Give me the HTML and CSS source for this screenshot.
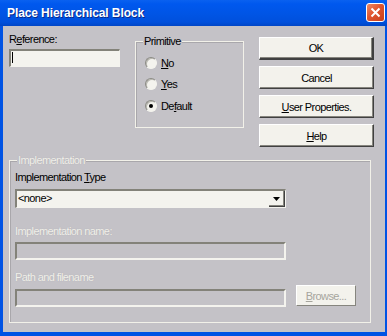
FILE: index.html
```html
<!DOCTYPE html>
<html lang="en">

<head>
    <meta charset="UTF-8">
    <title>Place Hierarchical Block</title>
    <link rel="stylesheet" href="styles.css">
</head>

<body>
    <div class="window">
        <div class="titlebar">
            <span class="title">Place Hierarchical Block</span>
            <span class="close">
                <svg width="11" height="11" viewBox="0 0 11 11">
                    <path d="M1.5 1.5 L9.5 9.5 M9.5 1.5 L1.5 9.5" stroke="#fff" stroke-width="2" fill="none" />
                </svg>
            </span>
        </div>

        <div class="client">
            <div class="top">
                <!-- Reference -->
                <div class="ref-col">
                    <div class="label">R<u>e</u>ference:</div>
                    <div class="textbox"><span class="caret"></span></div>
                </div>

                <!-- Primitive -->
                <div class="group primitive">
                    <span class="group-title">Primitive</span>
                    <div class="radio-row"><span class="radio"></span><span><u>N</u>o</span></div>
                    <div class="radio-row"><span class="radio"></span><span><u>Y</u>es</span></div>
                    <div class="radio-row"><span class="radio checked"></span><span>De<u>f</u>ault</span></div>
                </div>

                <!-- Buttons -->
                <div class="buttons">
                    <button class="btn default">OK</button>
                    <button class="btn">Cancel</button>
                    <button class="btn"><u>U</u>ser Properties.</button>
                    <button class="btn"><u>H</u>elp</button>
                </div>
            </div>

            <!-- Implementation -->
            <div class="group impl">
                <span class="group-title disabled">Implementation</span>
                <div class="label">Implementation <u>T</u>ype</div>
                <div class="combo">
                    <span class="combo-text">&lt;none&gt;</span>
                    <span class="combo-btn">
                        <svg width="7" height="4" viewBox="0 0 7 4">
                            <path d="M0 0 H7 L3.5 4 Z" fill="#000" />
                        </svg>
                    </span>
                </div>
                <div class="label disabled name-label">Implementation name:</div>
                <div class="textbox off name-box"></div>
                <div class="label disabled path-label">Path and filename</div>
                <div class="path-row">
                    <div class="textbox off"></div>
                    <button class="btn off"><u>B</u>rowse...</button>
                </div>
            </div>
        </div>
    </div>
</body>

</html>
```

FILE: styles.css
```css
body {
    margin: 0;
    padding: 0;
    background-color: #fff;
    font-family: "Liberation Sans", Arial, sans-serif;
    font-size: 11px;
    letter-spacing: -0.6px;
    color: #000;
}

.window {
    width: 387px;
    height: 336px;
    display: flex;
    flex-direction: column;
    background-color: #0053e4;
    /* Khung xanh kiểu XP */
}

.titlebar {
    height: 26px;
    display: flex;
    align-items: center;
    justify-content: space-between;
    padding: 0 2px 0 7px;
    background: linear-gradient(#0a61f0, #0058ee 15%, #0055e6 50%, #0050dc 85%, #0046c6);
}

.title {
    color: #fff;
    font-size: 12px;
    font-weight: bold;
    letter-spacing: -0.1px;
    text-shadow: 1px 1px 0 #0a2a8a;
}

.close {
    width: 19px;
    height: 19px;
    box-sizing: border-box;
    border: 1px solid #fff;
    border-radius: 3px;
    background: linear-gradient(135deg, #ec8a68, #e0552f 45%, #c8401c);
    display: flex;
    align-items: center;
    justify-content: center;
    margin-bottom: 1px;
}

.client {
    flex: 1;
    margin: 0 2px 4px 3px;
    background-color: #c4c2c7;
    padding: 7px 0 0 6px;
}

.top {
    display: flex;
    align-items: flex-start;
}

.label {
    line-height: 13px;
    height: 13px;
    white-space: nowrap;
}

.disabled {
    color: #f1f0ea;
    text-shadow: 0 0 1px #a9a8ad;
}

.ref-col {
    width: 111px;
}

.textbox {
    width: 111px;
    height: 18px;
    box-sizing: border-box;
    margin-top: 3px;
    background-color: #f4f3ee;
    border-style: solid;
    border-width: 2px 1px 1px 2px;
    border-color: #838279 #f4f3ee #f4f3ee #838279;
    padding: 1px 0 0 1px;
}

.textbox.off {
    background-color: transparent;
    border-width: 2px 2px 2px 2px;
    border-color: #838279 #f4f3ee #f4f3ee #838279;
}

.caret {
    display: block;
    width: 1px;
    height: 11px;
    background-color: #000;
}

/* Khung nhóm */
.group {
    position: relative;
    box-sizing: border-box;
    border: 1px solid #f2f1e9;
    box-shadow: inset 1px 1px 0 #a9a7ab;
}

.group-title {
    position: absolute;
    top: -7px;
    left: 7px;
    padding: 0 1px;
    line-height: 13px;
    background-color: #c4c2c7;
}

.primitive {
    width: 109px;
    height: 87px;
    margin: 8px 0 0 15px;
    padding: 10px 0 0 9px;
}

.radio-row {
    height: 21.5px;
    display: flex;
    align-items: center;
    gap: 4px;
}

.radio {
    width: 12px;
    height: 12px;
    box-sizing: border-box;
    border-radius: 50%;
    border: 1px solid;
    border-color: #8a8983 #f4f3ee #f4f3ee #8a8983;
    background-color: #f4f3ee;
    box-shadow: inset 1px 1px 0 #b8b7b0;
    display: flex;
    align-items: center;
    justify-content: center;
}

.radio.checked::after {
    content: "";
    width: 4px;
    height: 4px;
    border-radius: 50%;
    background-color: #000;
}

.buttons {
    margin: 4px 0 0 15px;
    display: flex;
    flex-direction: column;
    gap: 6px;
}

.btn {
    width: 115px;
    height: 23px;
    box-sizing: border-box;
    font-family: inherit;
    font-size: 11px;
    letter-spacing: -0.6px;
    color: #000;
    background-color: #f3f2ec;
    border-style: solid;
    border-width: 1px;
    border-color: #fff #404040 #404040 #fff;
    box-shadow: inset -1px -1px 0 #86857e;
    padding: 0;
}

.btn.default {
    border-width: 1px 2px 2px 1px;
}

.btn.off {
    width: 60px;
    height: 21px;
    margin-left: 10px;
    color: #a6a59d;
    border-color: #fff #86857e #86857e #fff;
    box-shadow: none;
}

.impl {
    width: 362px;
    margin-top: 13px;
    padding: 10px 0 15px 5px;
}

.combo {
    width: 271px;
    height: 19px;
    box-sizing: border-box;
    margin-top: 5px;
    display: flex;
    align-items: stretch;
    justify-content: space-between;
    background-color: #f4f3ee;
    border-style: solid;
    border-width: 2px 1px 1px 2px;
    border-color: #838279 #f4f3ee #f4f3ee #838279;
}

.combo-text {
    line-height: 15px;
    padding-left: 1px;
}

.combo-btn {
    width: 16px;
    box-sizing: border-box;
    display: flex;
    align-items: center;
    justify-content: center;
    border-style: solid;
    border-width: 0 1px 1px 0;
    border-color: #404040;
    box-shadow: inset -1px -1px 0 #86857e;
}

.impl .textbox {
    width: 271px;
}

.name-label {
    margin-top: 17px;
}

.name-box {
    margin-top: 4px;
}

.path-label {
    margin-top: 11px;
}

.path-row {
    display: flex;
    align-items: flex-start;
    margin-top: 1px;
}

.path-row .textbox {
    margin-top: 4px;
}
```
